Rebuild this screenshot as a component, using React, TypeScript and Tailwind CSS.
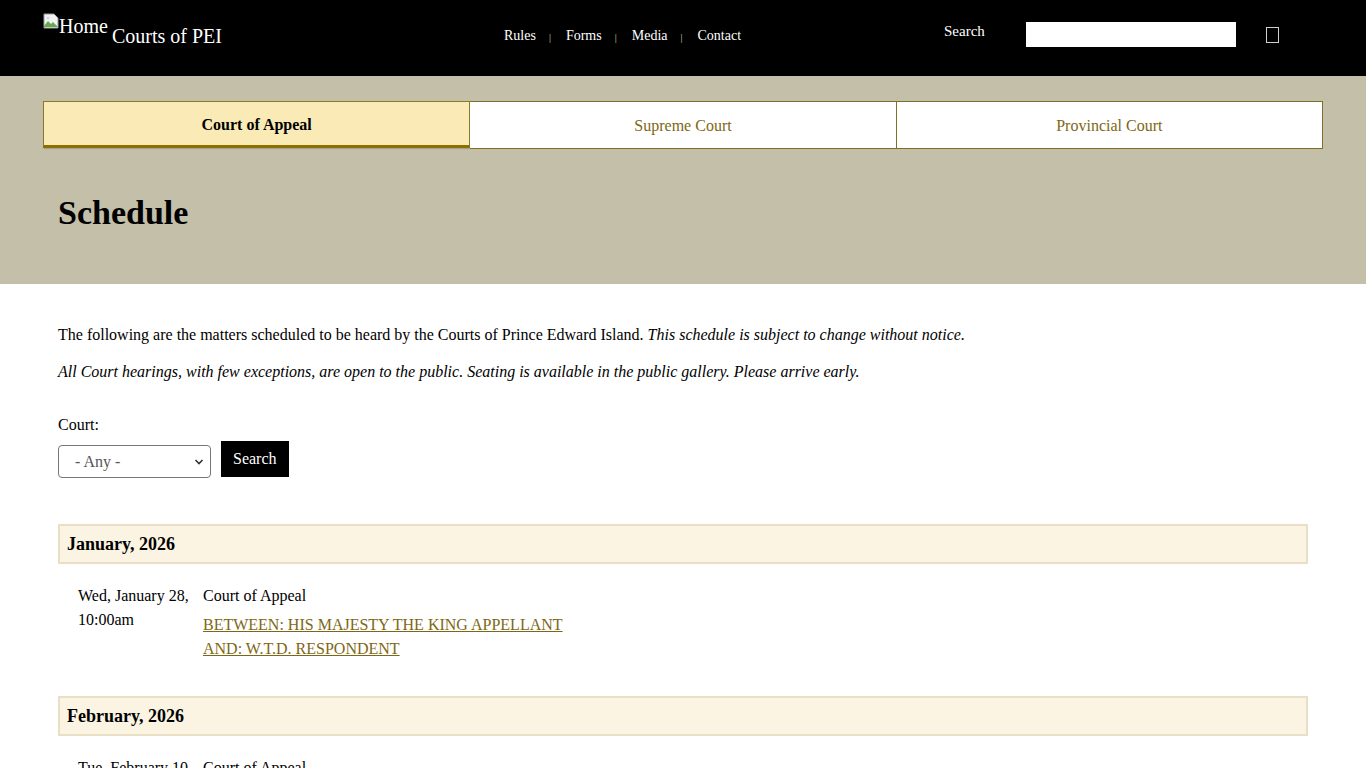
const serif = { fontFamily: '"Liberation Serif", "Times New Roman", serif' };

const NAV = ['Rules', 'Forms', 'Media', 'Contact'];

const TABS = [
  { label: 'Court of Appeal', active: true },
  { label: 'Supreme Court', active: false },
  { label: 'Provincial Court', active: false },
];

type Hearing = {
  day: string;
  time: string;
  court: string;
  lines: string[];
};

const MONTHS: { title: string; hearings: Hearing[] }[] = [
  {
    title: 'January, 2026',
    hearings: [
      {
        day: 'Wed, January 28,',
        time: '10:00am',
        court: 'Court of Appeal',
        lines: ['BETWEEN: HIS MAJESTY THE KING APPELLANT', 'AND: W.T.D. RESPONDENT'],
      },
    ],
  },
  {
    title: 'February, 2026',
    hearings: [
      {
        day: 'Tue, February 10,',
        time: '10:00am',
        court: 'Court of Appeal',
        lines: ['BETWEEN: HIS MAJESTY THE KING APPELLANT', 'AND: R.M. RESPONDENT'],
      },
    ],
  },
];

function BrokenImage() {
  return (
    <svg width="16" height="16" viewBox="0 0 16 16" className="mt-[1px] shrink-0">
      <path d="M1 1h10l4 4v10H1z" fill="#f3f3f3" stroke="#9a9a9a" />
      <path d="M1 13l4-5 3 3 2-2 5 5H1z" fill="#6aa84f" />
      <circle cx="5" cy="5" r="1.5" fill="#c9d9f0" />
    </svg>
  );
}

export default function App() {
  return (
    <div className="min-h-screen bg-white text-black" style={serif}>
      {/* Header */}
      <header className="h-[76px] bg-black text-white flex items-start px-[43px]">
        <div className="flex items-start pt-[12px] w-[440px]">
          <BrokenImage />
          <span className="text-[20px] leading-[30px] -mt-[1px]">Home</span>
          <span className="text-[20px] leading-[30px] ml-[4px] mt-[9px]">Courts of PEI</span>
        </div>
        <nav className="flex items-center pt-[26px] text-[14px] ml-[21px]">
          {NAV.map((item, i) => (
            <div key={item} className="flex items-center">
              {i > 0 && (
                <span className="ml-[13px] mr-[15px] text-[10px] text-[#d8d0a0] mt-[2px]">|</span>
              )}
              <a className="leading-[20px]">{item}</a>
            </div>
          ))}
        </nav>
        <div className="flex items-start pt-[22px] ml-auto mr-[44px]">
          <span className="text-[15px] leading-[20px] -mt-[1px] w-[82px]">Search</span>
          <input className="w-[210px] h-[25px] bg-white border-0 outline-none" />
          <span className="ml-[30px] mt-[5px] block w-[13px] h-[16px] border border-[#cfcfcf]" />
        </div>
      </header>

      {/* Banner */}
      <section className="bg-[#c3bfa8] px-[43px] pt-[25px] h-[208px]">
        <div className="flex">
          {TABS.map((tab, i) => (
            <div
              key={tab.label}
              className={
                tab.active
                  ? 'flex-1 h-[47px] flex items-center justify-center bg-[#faeab6] border border-[#8a7a2a] border-b-[3px] border-b-[#8b6f00] font-bold text-[16px] shadow-[1px_1px_1px_rgba(0,0,0,0.15)]'
                  : `flex-1 h-[48px] flex items-center justify-center bg-white border border-[#7d6f26] text-[#7e6714] text-[16px] ${i > 0 ? 'border-l-0' : ''}`
              }
            >
              <span className={tab.active ? 'mt-[3px]' : 'mt-[1px]'}>{tab.label}</span>
            </div>
          ))}
        </div>
        <h1 className="text-[34px] font-bold ml-[15px] mt-[44px] leading-[40px]">Schedule</h1>
      </section>

      {/* Content */}
      <main className="px-[58px] pt-[40px] text-[16px]">
        <p className="leading-[22px]">
          The following are the matters scheduled to be heard by the Courts of Prince Edward Island.{' '}
          <em>This schedule is subject to change without notice.</em>
        </p>
        <p className="leading-[22px] mt-[15px] italic">
          All Court hearings, with few exceptions, are open to the public. Seating is available in the public gallery. Please arrive early.
        </p>

        <form className="mt-[31px]">
          <label className="block leading-[22px]">Court:</label>
          <div className="flex items-start mt-[5px]">
            <div className="relative mt-[4px]">
              <select className="appearance-none w-[153px] h-[33px] border border-[#767676] rounded-[4px] bg-white pl-[16px] text-[16px] text-[#555]">
                <option>- Any -</option>
              </select>
              <svg
                width="10"
                height="10"
                viewBox="0 0 10 10"
                className="absolute right-[7px] top-[12px] pointer-events-none"
              >
                <path d="M1.5 3l3.5 3.5L8.5 3" fill="none" stroke="#333" strokeWidth="1.6" />
              </svg>
            </div>
            <button type="button" className="ml-[10px] h-[36px] px-[12px] bg-black text-white text-[16px]">
              Search
            </button>
          </div>
        </form>

        <div className="mt-[46px] pb-[40px]">
          {MONTHS.map((month) => (
            <div key={month.title} className="mb-[35px]">
              <h2 className="h-[40px] flex items-center bg-[#fbf4e2] border-2 border-[#e8dfc4] px-[7px] text-[18px] font-bold">
                {month.title}
              </h2>
              {month.hearings.map((h) => (
                <div key={h.day} className="flex pl-[20px] pt-[20px] leading-[24px]">
                  <div className="w-[125px]">
                    <div>{h.day}</div>
                    <div>{h.time}</div>
                  </div>
                  <div>
                    <div>{h.court}</div>
                    <a className="block mt-[5px] text-[#7e6714] underline">
                      {h.lines.map((line) => (
                        <div key={line}>{line}</div>
                      ))}
                    </a>
                  </div>
                </div>
              ))}
            </div>
          ))}
        </div>
      </main>
    </div>
  );
}
